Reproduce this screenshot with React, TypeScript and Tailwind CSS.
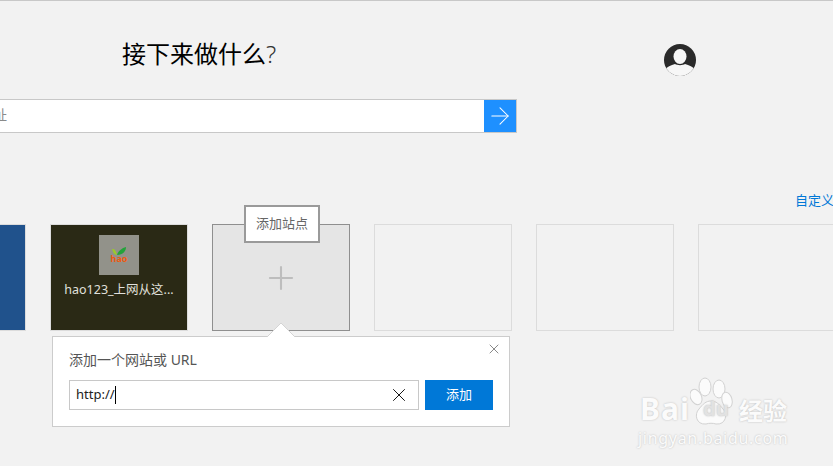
import { X, ArrowRight, Plus } from 'lucide-react'

const font = 'font-["Noto_Sans","Noto_Sans_CJK_SC",sans-serif]'

function Avatar() {
  return (
    <svg width="32" height="32" viewBox="0 0 32 32">
      <defs>
        <clipPath id="avatar-clip"><circle cx="16" cy="16" r="16" /></clipPath>
      </defs>
      <g clipPath="url(#avatar-clip)">
        <rect width="32" height="32" fill="#2a2a2a" />
        <ellipse cx="16" cy="12.5" rx="6.5" ry="7.5" fill="#f7f7f7" />
        <path d="M0 32V26c3-3 7-5 11-6 2 1.500 8 1.500 10 0 4 1 8 3 11 6v6z" fill="#f7f7f7" />
      </g>
    </svg>
  )
}

function Watermark() {
  return (
    <div className={`absolute left-[640px] top-[376px] w-[160px] text-[#fbfbfb] select-none pointer-events-none [text-shadow:0_0_2px_#b8b8b8] ${font}`}>
      <svg className="absolute left-[50px] top-0" width="50" height="50" viewBox="0 0 50 50" fill="#fbfbfb" stroke="#d2d2d2" strokeWidth="1">
        <ellipse cx="15" cy="10" rx="6" ry="9" />
        <ellipse cx="29" cy="12" rx="6" ry="9" />
        <ellipse cx="6" cy="20" rx="5.500" ry="8" transform="rotate(-25 6 20)" />
        <ellipse cx="37" cy="23" rx="5" ry="8" transform="rotate(-15 37 23)" />
        <path d="M21 24c5 0 8 3 12 8 5 5 3 16-7 15-3-1-7-1-10 0-10 1-12-10-7-15 4-5 7-8 12-8z" />
      </svg>
      <div className="relative flex items-end h-[48px]">
        <span className="font-bold text-[30px] leading-[32px] tracking-[1px]">Bai</span>
        <span className="font-bold text-[20px] leading-[26px] w-[49px] text-center text-[#e2e2e2] pl-[3px] pb-[3px]">du</span>
        <span className="font-bold text-[24px] leading-[28px] whitespace-nowrap">经验</span>
      </div>
      <div className="text-[16px] leading-[20px] tracking-[0.7px] ml-[-2px] mt-[3px] whitespace-nowrap">jingyan.baidu.com</div>
    </div>
  )
}

export default function App() {
  return (
    <div className={`relative w-[833px] h-[466px] overflow-hidden bg-[#f2f2f2] border-t border-[#c8c8c8] ${font}`}>
      <div className="flex pt-[38px] h-[98px] items-start">
        <h1 className="w-[664px] pl-[122px] text-[24px] leading-[30px] font-normal text-black whitespace-nowrap">
          接下来做什么<span className="font-light text-[#333]">?</span>
        </h1>
        <div className="mt-[5px]"><Avatar /></div>
      </div>

      <div className="flex w-[617px] h-[34px] ml-[-100px] bg-white border border-[#c8c8c8]">
        <div className="flex-1 pl-[8px] text-[14px] leading-[30px] text-[#8a8a8a] whitespace-nowrap">搜索或输入网址</div>
        <div className="w-[32px] bg-[#1e90ff] flex items-center justify-center">
          <ArrowRight size={28} strokeWidth={0.9} className="text-white" />
        </div>
      </div>

      <div className="flex justify-end mt-[59px] mr-[-1px] text-[13px] leading-[16px] text-[#0078d7]">自定义</div>

      <div className="flex gap-[24px] ml-[-112px] mt-[16px] w-max">
        <div className="w-[138px] h-[107px] bg-[#20528c] border border-[#dcdcdc]" />
        <div className="w-[138px] h-[107px] bg-[#2a2915] border border-[#dcdcdc] flex flex-col items-center pt-[10px]">
          <div className="w-[40px] h-[40px] bg-[#92928a] flex flex-col items-center justify-center">
            <svg width="14" height="8" viewBox="0 0 14 8">
              <path d="M5 8C6 4 10 1 14 0c0 4-3 8-9 8z" fill="#23a33a" />
              <path d="M0 2c2-.500 4 1 5 6-3 0-4-3-5-6z" fill="#9bc92c" />
            </svg>
            <span className="font-bold text-[9px] leading-[8px] text-[#ef5a0f]">hao</span>
          </div>
          <div className="mt-[6px] text-[12.5px] leading-[18px] text-[#e0e0dc] whitespace-nowrap">hao123_上网从这...</div>
        </div>
        <div className="relative w-[138px] h-[107px] bg-[#e5e5e5] border border-[#8f8f8f] flex items-center justify-center">
          <Plus size={38} strokeWidth={1.3} className="text-[#bdbdbd]" />
          <div className="absolute left-[31px] top-[-20px] w-[76px] h-[38px] bg-white border-2 border-[#9a9a9a] flex items-center justify-center text-[13px] text-[#666]">添加站点</div>
        </div>
        <div className="w-[138px] h-[107px] bg-[#f2f2f2] border border-[#dcdcdc]" />
        <div className="w-[138px] h-[107px] bg-[#f2f2f2] border border-[#dcdcdc]" />
        <div className="w-[138px] h-[107px] bg-[#f2f2f2] border border-[#dcdcdc]" />
      </div>

      <div className="relative ml-[52px] mt-[5px] w-[458px] h-[91px] bg-white border border-[#cccccc] px-[16px] pt-[14px]">
        <svg className="absolute left-[214px] top-[-14px]" width="28" height="14" viewBox="0 0 28 14">
          <path d="M0 14 14 0l14 14z" fill="#ffffff" />
          <path d="M0 14 14 0l14 14" fill="none" stroke="#d4d4d4" />
        </svg>
        <X size={16} strokeWidth={1.2} className="absolute right-[7px] top-[4px] text-[#6b6b6b]" />
        <div className="text-[14px] leading-[18px] text-[#555]">添加一个网站或 URL</div>
        <div className="flex gap-[6px] mt-[11px]">
          <div className="flex items-center w-[350px] h-[30px] border border-[#c8c8c8] pl-[6px] pr-[8px]">
            <span className="text-[13px] text-[#222]">http://</span>
            <span className="w-px h-[18px] bg-black" />
            <X size={22} strokeWidth={1} className="ml-auto text-black" />
          </div>
          <div className="w-[68px] h-[30px] bg-[#0078d7] text-white text-[13px] flex items-center justify-center">添加</div>
        </div>
      </div>

      <Watermark />
    </div>
  )
}
